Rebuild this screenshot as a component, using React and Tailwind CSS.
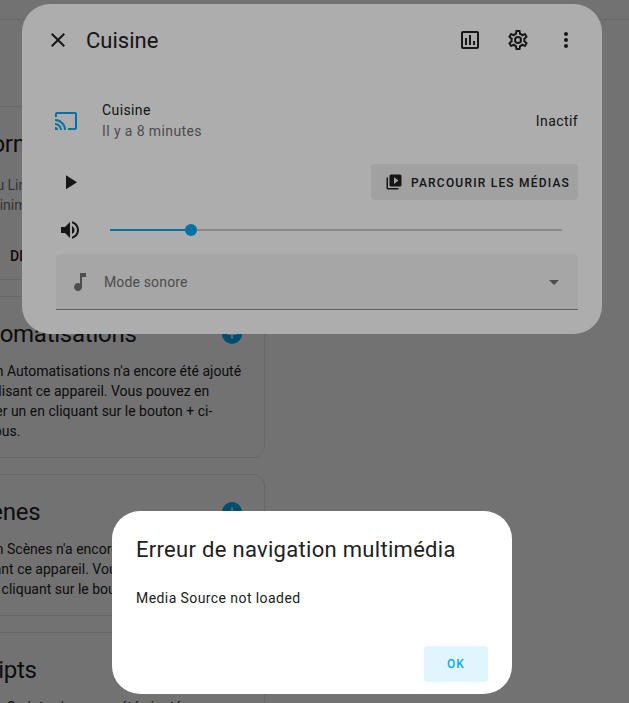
const mdi = {
  close: 'M19,6.41L17.59,5L12,10.59L6.41,5L5,6.41L10.59,12L5,17.59L6.41,19L12,13.41L17.59,19L19,17.59L13.41,12L19,6.41Z',
  chart: 'M9 17H7V10H9V17M13 17H11V7H13V17M17 17H15V13H17V17M19 19H5V5H19V19.1M19 3H5C3.9 3 3 3.9 3 5V19C3 20.1 3.9 21 5 21H19C20.1 21 21 20.1 21 19V5C21 3.9 20.1 3 19 3Z',
  cog: 'M12,8A4,4 0 0,1 16,12A4,4 0 0,1 12,16A4,4 0 0,1 8,12A4,4 0 0,1 12,8M12,10A2,2 0 0,0 10,12A2,2 0 0,0 12,14A2,2 0 0,0 14,12A2,2 0 0,0 12,10M10,22C9.75,22 9.54,21.82 9.5,21.58L9.13,18.93C8.5,18.68 7.96,18.34 7.44,17.94L4.95,18.95C4.73,19.03 4.46,18.95 4.34,18.73L2.34,15.27C2.21,15.05 2.27,14.78 2.46,14.63L4.57,12.97L4.5,12L4.57,11L2.46,9.37C2.27,9.22 2.21,8.95 2.34,8.73L4.34,5.27C4.46,5.05 4.73,4.96 4.95,5.05L7.44,6.05C7.96,5.66 8.5,5.32 9.13,5.07L9.5,2.42C9.54,2.18 9.75,2 10,2H14C14.25,2 14.46,2.18 14.5,2.42L14.87,5.07C15.5,5.32 16.04,5.66 16.56,6.05L19.05,5.05C19.27,4.96 19.54,5.05 19.66,5.27L21.66,8.73C21.79,8.95 21.73,9.22 21.54,9.37L19.43,11L19.5,12L19.43,13L21.54,14.63C21.73,14.78 21.79,15.05 21.66,15.27L19.66,18.73C19.54,18.95 19.27,19.04 19.05,18.95L16.56,17.95C16.04,18.34 15.5,18.68 14.87,18.93L14.5,21.58C14.46,21.82 14.25,22 14,22H10M11.25,4L10.88,6.61C9.68,6.86 8.62,7.5 7.85,8.39L5.44,7.35L4.69,8.65L6.8,10.2C6.4,11.37 6.4,12.64 6.8,13.8L4.68,15.36L5.43,16.66L7.86,15.62C8.63,16.5 9.68,17.14 10.87,17.38L11.24,20H12.76L13.13,17.39C14.32,17.14 15.37,16.5 16.14,15.62L18.57,16.66L19.32,15.36L17.2,13.81C17.6,12.64 17.6,11.37 17.2,10.2L19.31,8.65L18.56,7.35L16.15,8.39C15.38,7.5 14.32,6.86 13.12,6.62L12.75,4H11.25Z',
  dots: 'M12,16A2,2 0 0,1 14,18A2,2 0 0,1 12,20A2,2 0 0,1 10,18A2,2 0 0,1 12,16M12,10A2,2 0 0,1 14,12A2,2 0 0,1 12,14A2,2 0 0,1 10,12A2,2 0 0,1 12,10M12,4A2,2 0 0,1 14,6A2,2 0 0,1 12,8A2,2 0 0,1 10,6A2,2 0 0,1 12,4Z',
  cast: 'M1,10V12A9,9 0 0,1 10,21H12C12,14.92 7.07,10 1,10M1,14V16A5,5 0 0,1 6,21H8A7,7 0 0,0 1,14M1,18V21H4A3,3 0 0,0 1,18M21,3H3C1.89,3 1,3.89 1,5V8H3V5H21V19H14V21H21A2,2 0 0,0 23,19V5C23,3.89 22.1,3 21,3Z',
  play: 'M8,5.14V19.14L19,12.14L8,5.14Z',
  volume: 'M14,3.23V5.29C16.89,6.15 19,8.83 19,12C19,15.17 16.89,17.84 14,18.7V20.77C18,19.86 21,16.28 21,12C21,7.72 18,4.14 14,3.23M16.5,12C16.5,10.23 15.5,8.71 14,7.97V16C15.5,15.29 16.5,13.76 16.5,12M3,9V15H7L12,20V4L7,9H3Z',
  music: 'M12 3V13.55C11.41 13.21 10.73 13 10 13C7.79 13 6 14.79 6 17S7.79 21 10 21 14 19.21 14 17V7H18V3H12Z',
  media: 'M4,6H2V20A2,2 0 0,0 4,22H18V20H4V6M20,2H8A2,2 0 0,0 6,4V16A2,2 0 0,0 8,18H20A2,2 0 0,0 22,16V4A2,2 0 0,0 20,2M12,14.5V5.5L18,10L12,14.5Z',
  dropdown: 'M7,10L12,15L17,10H7Z',
  plus: 'M19,13H13V19H11V13H5V11H11V5H13V11H19V13Z',
};

function Icon({ path, className }) {
  return (
    <svg viewBox="0 0 24 24" className={className} fill="currentColor">
      <path d={path} />
    </svg>
  );
}

function SectionCard({ title, children }) {
  return (
    <div className="rounded-xl border border-[#e0e0e0] bg-[#fafafa] px-4 pb-4">
      <div className="flex h-[64px] items-start justify-between pt-[21px]">
        <span className="whitespace-nowrap text-2xl leading-8 tracking-[-0.25px] text-[#212121]">{title}</span>
        <span className="mr-[6px] mt-[6px] flex size-5 items-center justify-center rounded-full bg-[#03a9f4] text-white">
          <Icon path={mdi.plus} className="size-4" />
        </span>
      </div>
      <p className="text-sm leading-5 text-[#212121]">{children}</p>
    </div>
  );
}

export default function App() {
  return (
    <div className="relative h-[703px] w-[629px] overflow-hidden bg-[#fafafa] font-['Roboto',sans-serif]">
      {/* page behind the dialogs */}
      <div className="h-5 border-b border-[#e0e0e0]" />
      <div className="ml-[-53px] mt-[86px] flex w-[318px] flex-col gap-4">
        <div className="h-[174px] rounded-xl border border-[#e0e0e0] bg-[#fafafa] px-4 pt-[21px]">
          <div className="whitespace-nowrap text-2xl leading-8 tracking-[-0.25px] text-[#212121]">Informations sur l'appareil</div>
          <div className="ml-[5px] mt-[15px] whitespace-nowrap text-sm leading-5 text-[#727272]">
            <div>Menu Linux</div>
            <div>Le Minimum</div>
          </div>
          <div className="ml-[46px] mt-[31px] text-sm font-medium leading-5 text-[#212121]">DLNA</div>
        </div>
        <SectionCard title="Automatisations">
          Aucun Automatisations n'a encore été ajouté en utilisant ce appareil. Vous pouvez en ajouter un en cliquant sur le bouton + ci-dessous.
        </SectionCard>
        <SectionCard title="Scènes">
          Aucun Scènes n'a encore été ajouté en utilisant ce appareil. Vous pouvez en ajouter un en cliquant sur le bouton + ci-dessous.
        </SectionCard>
        <SectionCard title="Scripts">
          Aucun Scripts n'a encore été ajouté en utilisant ce appareil.
        </SectionCard>
      </div>

      <div className="absolute inset-0 bg-black/[.32]" />

      {/* more-info dialog */}
      <div className="absolute left-[22px] top-[4px] h-[330px] w-[580px] rounded-[28px] bg-white text-[#212121]">
        <div className="flex h-[72px] items-center pl-6 pr-6">
          <Icon path={mdi.close} className="size-6" />
          <h2 className="ml-4 flex-1 pt-[1px] text-[22px] font-normal leading-7">Cuisine</h2>
          <Icon path={mdi.chart} className="mr-6 size-6" />
          <Icon path={mdi.cog} className="mr-6 size-6" />
          <Icon path={mdi.dots} className="size-6" />
        </div>

        <div className="mt-[24px] flex items-center pl-8 pr-6">
          <Icon path={mdi.cast} className="size-6 text-[#03a9f4]" />
          <div className="ml-6 flex-1 text-sm leading-5 tracking-[0.4px]">
            <div>Cuisine</div>
            <div className="mt-[1px] text-[#727272]">Il y a 8 minutes</div>
          </div>
          <div className="text-sm tracking-[0.4px]">Inactif</div>
        </div>

        <div className="mt-[23px] flex h-9 items-center pl-[36px] pr-6">
          <Icon path={mdi.play} className="size-6" />
          <button className="ml-auto flex h-9 w-[207px] items-center rounded bg-black/[.07] pl-[14px] text-xs font-medium tracking-[1.2px]">
            <Icon path={mdi.media} className="size-[18px]" />
            <span className="ml-2 whitespace-nowrap pt-[1px]">PARCOURIR LES MÉDIAS</span>
          </button>
        </div>

        <div className="mt-[18px] flex h-6 items-center pl-[36px] pr-10">
          <Icon path={mdi.volume} className="size-6" />
          <div className="relative ml-7 h-[2px] flex-1 bg-[#c9c9c9]">
            <div className="h-[2px] w-[81px] bg-[#03a9f4]" />
            <div className="absolute left-[75px] top-[-5px] size-3 rounded-full bg-[#03a9f4]" />
          </div>
        </div>

        <div className="ml-[34px] mr-6 mt-[12px] flex h-14 items-center rounded-t border-b border-[#8c8c8c] bg-[#f5f5f5] pl-3 pr-3 text-[#727272]">
          <Icon path={mdi.music} className="size-6" />
          <span className="ml-3 flex-1 text-sm tracking-[0.15px]">Mode sonore</span>
          <Icon path={mdi.dropdown} className="size-6" />
        </div>
      </div>

      <div className="absolute inset-0 bg-black/[.32]" />

      {/* error dialog */}
      <div className="absolute left-[112px] top-[511px] h-[183px] w-[400px] rounded-[28px] bg-white px-6 text-[#212121]">
        <h2 className="pt-[25px] text-[22px] font-normal leading-7 tracking-[0.3px]">Erreur de navigation multimédia</h2>
        <p className="mt-6 text-sm leading-5 tracking-[0.42px]">Media Source not loaded</p>
        <div className="mt-[38px] flex justify-end">
          <button className="h-9 w-16 rounded bg-[#e1f5fe] text-xs font-medium tracking-[1.2px] text-[#03a9f4]">OK</button>
        </div>
      </div>
    </div>
  );
}
